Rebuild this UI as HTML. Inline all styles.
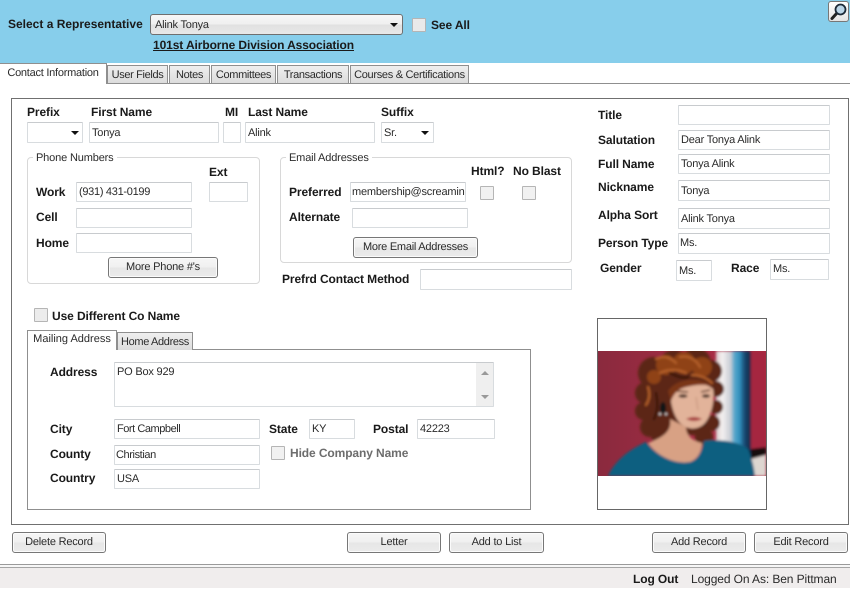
<!DOCTYPE html>
<html><head><meta charset="utf-8">
<style>
html,body{margin:0;padding:0;background:#fff;}
#p{position:relative;width:850px;height:590px;overflow:hidden;background:#fff;font-family:"Liberation Sans",sans-serif;font-size:11px;letter-spacing:-.2px;color:#2a2a2a;text-rendering:geometricPrecision;}
#p div{position:absolute;box-sizing:border-box;}
.l{font-weight:bold;font-size:12px;letter-spacing:-.1px;word-spacing:0;color:#1a1a1a;white-space:nowrap;line-height:14px;height:14px;}
.i{background:#fff;border:1px solid #d8dcdf;border-top-color:#c8cbce;border-radius:1px;padding-left:2px;white-space:nowrap;overflow:hidden;line-height:18px;}
.c{background:#f1f1f1;border:1px solid #b5b5b5;border-radius:1px;width:14px;height:14px;}
.b{background:linear-gradient(#f6f6f6,#f0f0f0 50%,#e6e6e6 50%,#ebebeb);border:1px solid #777;border-radius:3px;text-align:center;line-height:19px;box-shadow:inset 0 0 0 1px #fbfbfb;white-space:nowrap;}
.t{background:linear-gradient(#efefef,#dcdcdc);border:1px solid #8f8f8f;border-bottom:0;text-align:center;line-height:18px;white-space:nowrap;letter-spacing:-.35px;}
.a{border:1px solid #8f8f8f;border-bottom:0;background:#fff;text-align:center;line-height:17px;white-space:nowrap;}
.g{border:1px solid #d8d8d8;border-radius:4px;}
.n{background:#fff;padding:0 3px;line-height:12px;height:12px;white-space:nowrap;letter-spacing:-.15px;}
.ar{width:0;height:0;border-left:4px solid transparent;border-right:4px solid transparent;border-top:4px solid #111;}
</style></head><body>
<div id="p">
<div style="left:0;top:0;width:850px;height:63px;background:#87ceeb"></div>
<div class="l" style="left:8px;top:17px;letter-spacing:0">Select a Representative</div>
<div style="left:150px;top:14px;width:253px;height:21px;border:1px solid #6f6f6f;border-radius:3px;background:linear-gradient(#f7f7f7,#efefef 50%,#e0e0e0 50%,#e8e8e8);padding-left:4px;line-height:20px">Alink Tonya</div>
<div class="ar" style="left:390px;top:23px"></div>
<div class="c" style="left:412px;top:18px;background:#eaeaea"></div>
<div class="l" style="left:431px;top:18px">See All</div>
<div class="l" style="left:153px;top:38px;text-decoration:underline">101st Airborne Division Association</div>
<div style="left:828px;top:1px;width:21px;height:21px;background:linear-gradient(#fff,#e4e4e4);border:1px solid #777;border-radius:3px"></div>
<svg style="position:absolute;left:828px;top:1px" width="21" height="21" viewBox="0 0 21 21"><path d="M4 17.5 L9 12" stroke="#222" stroke-width="3" stroke-linecap="round"/><circle cx="12.5" cy="8.5" r="5" fill="#bcd6e8" stroke="#1c2a38" stroke-width="1.8"/></svg>

<!-- main tabs -->
<div style="left:0;top:83px;width:850px;height:1px;background:#8f8f8f"></div>
<div class="a" style="left:0;top:63px;width:107px;height:21px;border-left:0;line-height:18px;letter-spacing:-.25px">Contact Information</div>
<div class="t" style="left:107px;top:65px;width:61px;height:18px">User Fields</div>
<div class="t" style="left:169px;top:65px;width:41px;height:18px">Notes</div>
<div class="t" style="left:211px;top:65px;width:65px;height:18px">Committees</div>
<div class="t" style="left:277px;top:65px;width:72px;height:18px">Transactions</div>
<div class="t" style="left:350px;top:65px;width:119px;height:18px;letter-spacing:-.3px">Courses &amp; Certifications</div>

<div style="left:11px;top:98px;width:838px;height:427px;border:1px solid #707070"></div>

<!-- name row -->
<div class="l" style="left:27px;top:105px">Prefix</div>
<div class="l" style="left:91px;top:105px">First Name</div>
<div class="l" style="left:225px;top:105px">MI</div>
<div class="l" style="left:248px;top:105px">Last Name</div>
<div class="l" style="left:381px;top:105px">Suffix</div>
<div class="i" style="left:27px;top:122px;width:56px;height:21px"></div>
<div class="ar" style="left:71px;top:131px"></div>
<div class="i" style="left:89px;top:122px;width:130px;height:21px;padding-top:1px">Tonya</div>
<div class="i" style="left:223px;top:122px;width:18px;height:21px"></div>
<div class="i" style="left:245px;top:122px;width:130px;height:21px;padding-top:1px">Alink</div>
<div class="i" style="left:381px;top:122px;width:53px;height:21px;padding-top:1px">Sr.</div>
<div class="ar" style="left:421px;top:131px"></div>

<!-- phone -->
<div class="g" style="left:27px;top:157px;width:233px;height:127px"></div>
<div class="n" style="left:33px;top:152px">Phone Numbers</div>
<div class="l" style="left:209px;top:165px">Ext</div>
<div class="l" style="left:36px;top:185px">Work</div>
<div class="i" style="left:76px;top:182px;width:116px;height:20px;letter-spacing:-.3px">(931) 431-0199</div>
<div class="i" style="left:209px;top:182px;width:39px;height:20px"></div>
<div class="l" style="left:36px;top:210px">Cell</div>
<div class="i" style="left:76px;top:208px;width:116px;height:20px"></div>
<div class="l" style="left:36px;top:236px">Home</div>
<div class="i" style="left:76px;top:233px;width:116px;height:20px"></div>
<div class="b" style="left:108px;top:257px;width:110px;height:21px">More Phone #'s</div>

<!-- email -->
<div class="g" style="left:280px;top:157px;width:292px;height:106px"></div>
<div class="n" style="left:286px;top:152px">Email Addresses</div>
<div class="l" style="left:471px;top:164px">Html?</div>
<div class="l" style="left:513px;top:164px">No Blast</div>
<div class="l" style="left:289px;top:185px">Preferred</div>
<div class="i" style="left:350px;top:182px;width:116px;height:20px;padding-left:1px;padding-right:1px">membership@screaming</div>
<div class="c" style="left:480px;top:186px"></div>
<div class="c" style="left:522px;top:186px"></div>
<div class="l" style="left:289px;top:210px">Alternate</div>
<div class="i" style="left:352px;top:208px;width:116px;height:20px"></div>
<div class="b" style="left:353px;top:237px;width:125px;height:21px;letter-spacing:-.25px">More Email Addresses</div>
<div class="l" style="left:282px;top:272px">Prefrd Contact Method</div>
<div class="i" style="left:420px;top:269px;width:152px;height:21px"></div>

<!-- right -->
<div class="l" style="left:598px;top:108px">Title</div>
<div class="i" style="left:678px;top:105px;width:152px;height:20px"></div>
<div class="l" style="left:598px;top:133px">Salutation</div>
<div class="i" style="left:678px;top:130px;width:152px;height:20px">Dear Tonya Alink</div>
<div class="l" style="left:598px;top:157px">Full Name</div>
<div class="i" style="left:678px;top:154px;width:152px;height:20px">Tonya Alink</div>
<div class="l" style="left:598px;top:180px">Nickname</div>
<div class="i" style="left:678px;top:180px;width:152px;height:21px;padding-top:1px">Tonya</div>
<div class="l" style="left:598px;top:208px">Alpha Sort</div>
<div class="i" style="left:678px;top:208px;width:152px;height:21px;padding-top:1px">Alink Tonya</div>
<div class="l" style="left:598px;top:236px">Person Type</div>
<div class="i" style="left:678px;top:233px;width:152px;height:21px;padding-left:1px">Ms.</div>
<div class="l" style="left:600px;top:261px">Gender</div>
<div class="i" style="left:676px;top:260px;width:36px;height:21px;padding-top:1px">Ms.</div>
<div class="l" style="left:731px;top:261px">Race</div>
<div class="i" style="left:770px;top:259px;width:59px;height:21px">Ms.</div>

<!-- photo -->
<div style="left:597px;top:318px;width:170px;height:192px;border:1px solid #666;background:#fff"></div>
<svg style="position:absolute;left:598px;top:351px" width="168" height="125" viewBox="0 0 168 125">
<defs><filter id="f" x="-10%" y="-10%" width="120%" height="120%"><feGaussianBlur stdDeviation="1.2"/></filter>
<linearGradient id="bg" x1="0" x2="1" y1="0" y2="0"><stop offset="0" stop-color="#8a2a3e"/><stop offset=".7" stop-color="#a82c44"/></linearGradient>
<linearGradient id="pole" x1="0" x2="1" y1="0" y2="0"><stop offset="0" stop-color="#d9c9cc"/><stop offset=".18" stop-color="#f4f1f0"/><stop offset=".42" stop-color="#c8ccd4"/><stop offset=".52" stop-color="#5aa8cc"/><stop offset=".68" stop-color="#2f8fbc"/><stop offset=".8" stop-color="#1b4f78"/><stop offset="1" stop-color="#0e2140"/></linearGradient></defs>
<rect width="168" height="125" fill="url(#bg)"/>
<g filter="url(#f)">
<rect x="118" y="0" width="35" height="125" fill="url(#pole)"/>
<rect x="153" y="0" width="15" height="98" fill="#a52840"/>
<path d="M153 98L168 96V104L153 108Z" fill="#14090c"/>
<path d="M153 108L168 104V125H153Z" fill="#ddd6d0"/>
<!-- hair mass -->
<g fill="#5c2613">
<circle cx="56" cy="22" r="16"/><circle cx="48" cy="42" r="11"/><circle cx="46" cy="60" r="9"/><circle cx="52" cy="76" r="10"/><circle cx="62" cy="84" r="9"/>
<circle cx="76" cy="14" r="15"/><circle cx="98" cy="12" r="15"/><circle cx="113" cy="20" r="11"/><circle cx="118" cy="38" r="8"/><circle cx="118" cy="56" r="7"/><circle cx="114" cy="72" r="8"/><circle cx="106" cy="86" r="9"/>
<rect x="52" y="16" width="60" height="68"/>
</g>
<g fill="#8f4219">
<circle cx="68" cy="14" r="10"/><circle cx="86" cy="12" r="11"/><circle cx="104" cy="16" r="10"/><circle cx="56" cy="26" r="7"/>
</g>
<path d="M58 8C66 4 72 6 78 12M82 6C90 4 98 8 102 16M62 22C70 18 80 18 88 22M94 24C100 24 108 26 114 32M50 36C52 42 52 48 48 54" stroke="#b5602a" stroke-width="2.2" fill="none" stroke-linecap="round"/>
<path d="M72 22C80 26 86 28 90 26M58 42C60 52 60 60 56 68M112 50C112 58 110 66 106 74" stroke="#3a160c" stroke-width="2.4" fill="none" stroke-linecap="round"/>
<!-- neck / chest -->
<path d="M72 68C74 80 66 86 50 92C58 104 76 114 92 111C100 108 104 100 104 92C94 90 88 84 88 76Z" fill="#d8a184"/>
<!-- face -->
<path d="M72 38C82 28 106 30 115 38C117 50 113 66 106 73C98 80 88 78 82 72C76 66 72 52 72 38Z" fill="#e2b39a"/>
<path d="M70 40C78 28 100 24 116 36C106 32 96 34 88 36C80 38 76 42 73 50Z" fill="#7a3516"/>
<path d="M79 40L90 41M103 41L112 39" stroke="#5a3424" stroke-width="1.6"/>
<ellipse cx="85" cy="45" rx="4.5" ry="1.8" fill="#4a3026"/><ellipse cx="108" cy="45" rx="4" ry="1.8" fill="#4a3026"/>
<path d="M98 46L100 59" stroke="#cf9f86" stroke-width="1.6"/>
<path d="M88 68Q96 64 104 68Q96 72 88 68Z" fill="#a83f40"/>
<!-- earring -->
<ellipse cx="65" cy="57" rx="3" ry="6" fill="#0c1418"/>
<circle cx="62" cy="63" r="1.1" fill="#e8e8e8"/><circle cx="68" cy="63" r="1.1" fill="#e8e8e8"/>
<!-- sweater -->
<path d="M10 125C16 112 28 100 48 91C58 104 76 114 92 111C100 109 104 100 106 90C122 88 140 90 150 98C154 108 156 116 157 125Z" fill="#0e5f80"/>
</g></svg>

<!-- address -->
<div class="c" style="left:34px;top:308px;background:#ececec"></div>
<div class="l" style="left:52px;top:309px">Use Different Co Name</div>
<div style="left:27px;top:349px;width:504px;height:161px;border:1px solid #8f8f8f"></div>
<div class="a" style="left:27px;top:330px;width:90px;height:20px;letter-spacing:0">Mailing Address</div>
<div class="t" style="left:117px;top:332px;width:76px;height:18px;border-bottom:0">Home Address</div>
<div class="l" style="left:50px;top:365px">Address</div>
<div class="i" style="left:114px;top:362px;width:380px;height:45px">PO Box 929</div>
<div style="left:476px;top:363px;width:17px;height:43px;background:#efefef"></div>
<div class="ar" style="left:481px;top:371px;border-top:0;border-bottom:4px solid #999"></div>
<div class="ar" style="left:481px;top:395px;border-top-color:#999"></div>
<div class="l" style="left:50px;top:422px">City</div>
<div class="i" style="left:114px;top:419px;width:146px;height:20px;letter-spacing:-.45px">Fort Campbell</div>
<div class="l" style="left:269px;top:422px">State</div>
<div class="i" style="left:309px;top:419px;width:46px;height:20px">KY</div>
<div class="l" style="left:373px;top:422px">Postal</div>
<div class="i" style="left:417px;top:419px;width:78px;height:20px">42223</div>
<div class="l" style="left:50px;top:447px">County</div>
<div class="i" style="left:114px;top:445px;width:146px;height:20px;padding-left:1px;letter-spacing:-.4px">Christian</div>
<div class="c" style="left:271px;top:446px"></div>
<div class="l" style="left:290px;top:446px;color:#6d6d6d">Hide Company Name</div>
<div class="l" style="left:50px;top:471px">Country</div>
<div class="i" style="left:114px;top:469px;width:146px;height:20px">USA</div>

<!-- bottom buttons -->
<div class="b" style="left:12px;top:532px;width:94px;height:21px">Delete Record</div>
<div class="b" style="left:347px;top:532px;width:94px;height:21px">Letter</div>
<div class="b" style="left:449px;top:532px;width:95px;height:21px">Add to List</div>
<div class="b" style="left:652px;top:532px;width:94px;height:21px">Add Record</div>
<div class="b" style="left:754px;top:532px;width:94px;height:21px">Edit Record</div>

<!-- footer -->
<div style="left:0;top:564px;width:850px;height:1px;background:#9a9a9a"></div>
<div style="left:0;top:565px;width:850px;height:2px;background:#f7f7f7"></div>
<div style="left:0;top:567px;width:850px;height:1px;background:#a5a5a5"></div>
<div style="left:0;top:568px;width:850px;height:20px;background:#f0eded"></div>
<div class="l" style="left:633px;top:572px;word-spacing:0">Log Out</div>
<div style="left:691px;top:572px;line-height:14px;white-space:nowrap;letter-spacing:-.1px;font-size:12px">Logged On As: Ben Pittman</div>
</div>
</body></html>
